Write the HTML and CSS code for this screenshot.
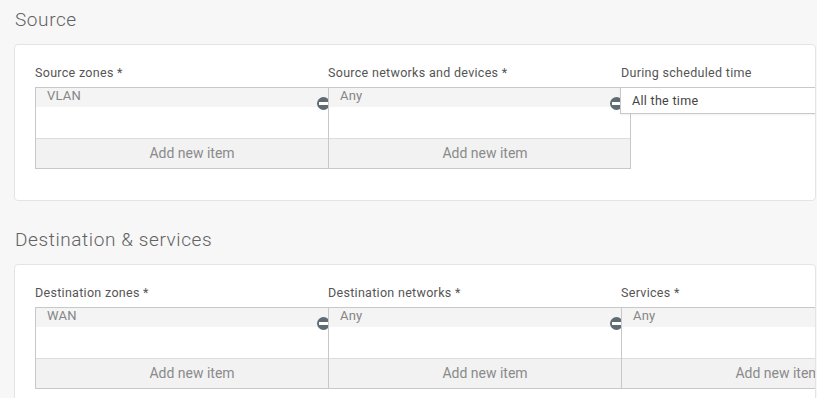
FILE: index.html
```html
<!DOCTYPE html>
<html lang="en">
<head>
  <meta charset="UTF-8" />
  <meta name="viewport" content="width=device-width, initial-scale=1.0">
  <title>Firewall rule</title>
  <link rel="stylesheet" href="styles.css">
</head>
<body>
  <h2 class="section-title first">Source</h2>
  <div class="card">
    <div class="fields">
      <div class="field">
        <label>Source zones *</label>
        <div class="picker">
          <div class="picker-list">
            <div class="picker-item">VLAN<span class="remove"></span></div>
          </div>
          <div class="picker-add">Add new item</div>
        </div>
      </div>
      <div class="field">
        <label>Source networks and devices *</label>
        <div class="picker">
          <div class="picker-list">
            <div class="picker-item">Any<span class="remove"></span></div>
          </div>
          <div class="picker-add">Add new item</div>
        </div>
      </div>
      <div class="field">
        <label>During scheduled time</label>
        <div class="select">All the time</div>
      </div>
    </div>
  </div>

  <h2 class="section-title">Destination &amp; services</h2>
  <div class="card">
    <div class="fields">
      <div class="field">
        <label>Destination zones *</label>
        <div class="picker">
          <div class="picker-list">
            <div class="picker-item">WAN<span class="remove"></span></div>
          </div>
          <div class="picker-add">Add new item</div>
        </div>
      </div>
      <div class="field">
        <label>Destination networks *</label>
        <div class="picker">
          <div class="picker-list">
            <div class="picker-item">Any<span class="remove"></span></div>
          </div>
          <div class="picker-add">Add new item</div>
        </div>
      </div>
      <div class="field">
        <label>Services *</label>
        <div class="picker">
          <div class="picker-list">
            <div class="picker-item">Any<span class="remove"></span></div>
          </div>
          <div class="picker-add">Add new item</div>
        </div>
      </div>
    </div>
  </div>
</body>
</html>
```

FILE: styles.css
```css
body {
  font-family: Roboto, "Liberation Sans", sans-serif;
  margin: 0;
  background: #f7f7f7;
  color: #333;
  overflow: hidden;
}
.section-title {
  font-size: 19px;
  font-weight: 300;
  line-height: 24px;
  letter-spacing: 0.6px;
  color: #626262;
  margin: 27px 0 12px 15px;
}
.section-title.first {
  margin-top: 8px;
  margin-bottom: 12px;
}
.card {
  margin-left: 14px;
  width: 802px;
  background: #fff;
  border: 1px solid #e4e4e4;
  border-radius: 4px;
  padding: 20px 0 31px 20px;
  box-sizing: border-box;
  overflow: hidden;
}
.fields {
  display: grid;
  grid-template-columns: 293px 293px 293px;
}
.field label {
  display: block;
  font-size: 12.5px;
  line-height: 16px;
  letter-spacing: 0.3px;
  color: #555;
  margin-bottom: 6px;
}
.picker {
  position: relative;
  width: 301px;
  border: 1px solid #c8c8c8;
  background: #fff;
}
.picker-list {
  height: 50px;
}
.picker-item {
  position: relative;
  height: 19px;
  background: #f4f4f4;
  font-size: 13px;
  line-height: 15px;
  letter-spacing: 0.2px;
  color: #858585;
  padding: 0 11px;
}
.remove {
  position: absolute;
  right: 7px;
  top: 9px;
  width: 13px;
  height: 13px;
  border-radius: 50%;
  background: #5f6c74;
}
.remove::after {
  content: "";
  position: absolute;
  left: 2px;
  right: 0;
  top: 5px;
  height: 3px;
  background: #fff;
}
.picker-add {
  height: 29px;
  border-top: 1px solid #dcdcdc;
  background: #f2f2f2;
  font-size: 14px;
  line-height: 29px;
  color: #8a8a8a;
  text-align: center;
  padding-left: 11px;
}
.select {
  position: relative;
  margin-left: -1px;
  width: 300px;
  height: 25px;
  border: 1px solid #c8c8c8;
  background: #fff;
  font-size: 12.5px;
  line-height: 25px;
  letter-spacing: 0.3px;
  color: #444;
  padding-left: 11px;
  box-shadow: 0 1px 2px rgba(0, 0, 0, 0.06);
}
```
